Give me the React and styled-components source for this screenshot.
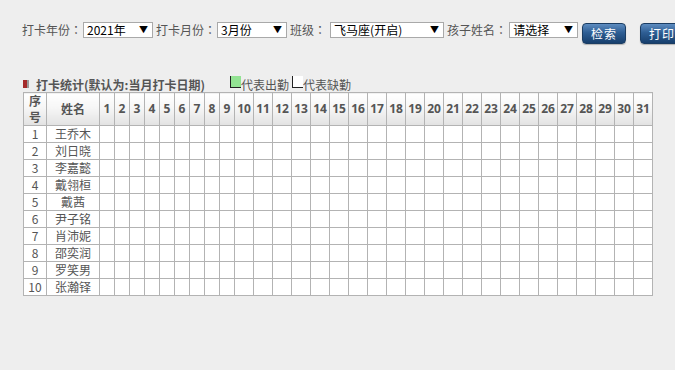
import React from "react"
import styled, { createGlobalStyle } from "styled-components"

const GlobalStyle = createGlobalStyle`
  html, body {
    margin: 0;
    padding: 0;
    background: #eeeeee;
    overflow: hidden;
  }
  body {
    font-family: "Noto Sans CJK SC", "Noto Sans", sans-serif;
  }
`

const Page = styled.div`
  padding: 22px 0 0 22px;
  width: 653px;
  color: #555;
`

const Toolbar = styled.div`
  display: flex;
  align-items: flex-start;
  white-space: nowrap;
  height: 23px;
`

const Label = styled.span`
  font-size: 12px;
  line-height: 16px;
  color: #555;
  margin-right: ${p => p.$gap || 1}px;
  margin-left: ${p => p.$lead || 0}px;
`

// full-width colon centred in its cell, as the reference renders it
const Colon = styled.span`
  font-family: "Noto Sans CJK TC", sans-serif;
`

const Select = styled.div`
  box-sizing: border-box;
  display: flex;
  align-items: center;
  justify-content: space-between;
  width: ${p => p.$w}px;
  height: 16px;
  background: #fff;
  border: 1px solid #a9a9a9;
  padding: 0 4px 0 3px;
  font-size: 12px;
  line-height: 14px;
  color: #000;
  flex-shrink: 0;
`

const Arrow = styled.span`
  font-size: 9px;
  line-height: 14px;
  color: #000;
`

const Button = styled.button`
  box-sizing: border-box;
  flex-shrink: 0;
  width: 44px;
  height: 21px;
  margin-top: 1px;
  margin-left: ${p => p.$lead}px;
  padding: 0;
  border: 1px solid #1b3d63;
  border-radius: 4px;
  background: linear-gradient(#5d8cc0, #2e5e94 45%, #173f6d);
  color: #fff;
  font-family: "Noto Sans CJK SC", sans-serif;
  font-size: 12px;
  line-height: 19px;
  letter-spacing: 1px;
  box-shadow: 0 1px 1px rgba(0, 0, 0, 0.25);
`

const TitleRow = styled.div`
  display: flex;
  align-items: center;
  height: 16px;
  margin-top: 31px;
  margin-left: 1px;
  font-size: 12px;
`

const Marker = styled.span`
  display: inline-block;
  width: 4px;
  height: 8px;
  background: #a42a2a;
  border-right: 2px solid #999;
  margin-right: 7px;
  margin-top: -1px;
`

const Title = styled.span`
  font-weight: bold;
  color: #555;
`

const Legend = styled.span`
  display: flex;
  align-items: center;
  flex-shrink: 0;
  margin-left: ${p => p.$lead}px;
  color: #555;
`

const Swatch = styled.span`
  box-sizing: border-box;
  display: block;
  flex: 0 0 11px;
  width: 11px;
  height: 12px;
  margin-top: -4px;
  background: ${p => p.$fill};
  border-left: 1px solid #222;
  border-bottom: 1px solid #222;
`

const Table = styled.table`
  border-collapse: collapse;
  table-layout: fixed;
  width: 630px;
  margin-left: 1px;
  background: #fff;
  font-size: 12px;
  border: 1px solid #b3b3b3;
`

const Th = styled.th`
  border: 1px solid #b3b3b3;
  padding: 0;
  height: 32px;
  font-weight: bold;
  color: #555;
  line-height: 16px;
  text-align: center;
  background: linear-gradient(#ffffff, #f6f6f6 45%, #e2e2e2);
  font-family: ${p => (p.$num ? '"Open Sans", sans-serif' : '"Noto Sans CJK SC", sans-serif')};
`

const Td = styled.td`
  border: 1px solid #b3b3b3;
  padding: 0;
  height: 16px;
  line-height: 16px;
  text-align: center;
  color: #555;
  overflow: hidden;
`

const names = [
  "王乔木", "刘日晓", "李嘉懿", "戴翎桓", "戴茜",
  "尹子铭", "肖沛妮", "邵奕润", "罗笑男", "张瀚铎"
]

const days = Array.from({ length: 31 }, (_, i) => i + 1)

const App = () => {
  return (
    <>
      <GlobalStyle />
      <Page>
        <Toolbar>
          <Label>打卡年份<Colon>：</Colon></Label>
          <Select $w={70}>2021年<Arrow>▼</Arrow></Select>
          <Label $lead={3}>打卡月份<Colon>：</Colon></Label>
          <Select $w={70}>3月份<Arrow>▼</Arrow></Select>
          <Label $lead={3} $gap={4}>班级<Colon>：</Colon></Label>
          <Select $w={114}>飞马座(开启)<Arrow>▼</Arrow></Select>
          <Label $lead={3} $gap={2}>孩子姓名<Colon>：</Colon></Label>
          <Select $w={69}>请选择<Arrow>▼</Arrow></Select>
          <Button $lead={4}>检索</Button>
          <Button $lead={14}>打印</Button>
        </Toolbar>

        <TitleRow>
          <Marker />
          <Title>打卡统计(默认为:当月打卡日期)</Title>
          <Legend $lead={25}><Swatch $fill="#93e393" />代表出勤</Legend>
          <Legend $lead={3}><Swatch $fill="#fff" />代表缺勤</Legend>
        </TitleRow>

        <Table>
          <colgroup>
            <col style={{ width: 23 }} />
            <col style={{ width: 53 }} />
            {days.map(d => (
              <col key={d} style={{ width: d < 10 ? 15 : 19 }} />
            ))}
          </colgroup>
          <thead>
            <tr>
              <Th>序<br />号</Th>
              <Th>姓名</Th>
              {days.map(d => <Th key={d} $num>{d}</Th>)}
            </tr>
          </thead>
          <tbody>
            {names.map((name, i) => (
              <tr key={name}>
                <Td>{i + 1}</Td>
                <Td>{name}</Td>
                {days.map(d => <Td key={d} />)}
              </tr>
            ))}
          </tbody>
        </Table>
      </Page>
    </>
  )
}

export default App
